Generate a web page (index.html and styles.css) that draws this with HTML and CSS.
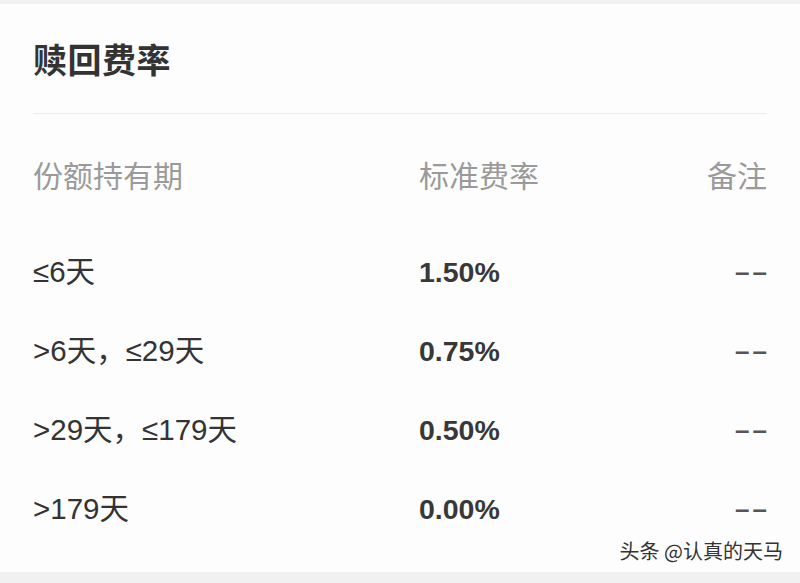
FILE: index.html
```html
<!DOCTYPE html>
<html lang="zh-CN">
<head>
<meta charset="utf-8">
<link rel="stylesheet" href="styles.css">
</head>
<body>
<div class="page">
  <section class="card">
    <h1 class="title">赎回费率</h1>
    <div class="divider"></div>
    <div class="table">
      <div class="row head">
        <span class="c1">份额持有期</span>
        <span class="c2">标准费率</span>
        <span class="c3">备注</span>
      </div>
      <div class="row gap">
        <span class="c1">≤6天</span>
        <span class="c2 num">1.50%</span>
        <span class="c3 dash">––</span>
      </div>
      <div class="row">
        <span class="c1">&gt;6天，≤29天</span>
        <span class="c2 num">0.75%</span>
        <span class="c3 dash">––</span>
      </div>
      <div class="row">
        <span class="c1">&gt;29天，≤179天</span>
        <span class="c2 num">0.50%</span>
        <span class="c3 dash">––</span>
      </div>
      <div class="row">
        <span class="c1">&gt;179天</span>
        <span class="c2 num">0.00%</span>
        <span class="c3 dash">––</span>
      </div>
    </div>
    <div class="watermark">头条 @认真的天马</div>
  </section>
</div>
</body>
</html>
```

FILE: styles.css
```css
html, body {
  margin: 0;
  padding: 0;
  background: #f1f1f1;
}
body {
  font-family: "Noto Sans CJK SC", "Liberation Sans", sans-serif;
  color: #333;
}
.page {
  padding-top: 4px;
  height: 583px;
  box-sizing: border-box;
}
.card {
  position: relative;
  background: #fdfdfd;
  height: 568px;
  box-sizing: border-box;
  padding: 31px 33px 0 33px;
}
.title {
  margin: 0;
  font-size: 34px;
  line-height: 48px;
  font-weight: 700;
  color: #333;
  letter-spacing: 0.5px;
}
.divider {
  margin-top: 30px;
  height: 1px;
  background: #ececec;
}
.table {
  padding-top: 20px;
}
.row {
  display: grid;
  grid-template-columns: 386px 1fr auto;
  height: 79px;
  align-items: center;
  font-family: "Liberation Sans", "Noto Sans CJK SC", sans-serif;
  font-size: 29.5px;
  line-height: 40px;
  color: #333;
}
.row.gap {
  margin-top: 19px;
}
.row.head {
  font-family: "Noto Sans CJK SC", sans-serif;
  font-size: 30px;
  color: #9a9a9a;
}
.c3 {
  text-align: right;
}
.num {
  font-family: "Liberation Sans", sans-serif;
  font-weight: 700;
  font-size: 28.5px;
  color: #383838;
}
.dash {
  font-family: "Liberation Sans", sans-serif;
  font-size: 26px;
  font-weight: 700;
  letter-spacing: 3px;
  margin-right: -3px;
  color: #555;
}
.watermark {
  position: absolute;
  right: 17px;
  bottom: 6px;
  font-size: 20px;
  line-height: 30px;
  color: #333;
  text-shadow: 0 0 2px #fff;
}
```
